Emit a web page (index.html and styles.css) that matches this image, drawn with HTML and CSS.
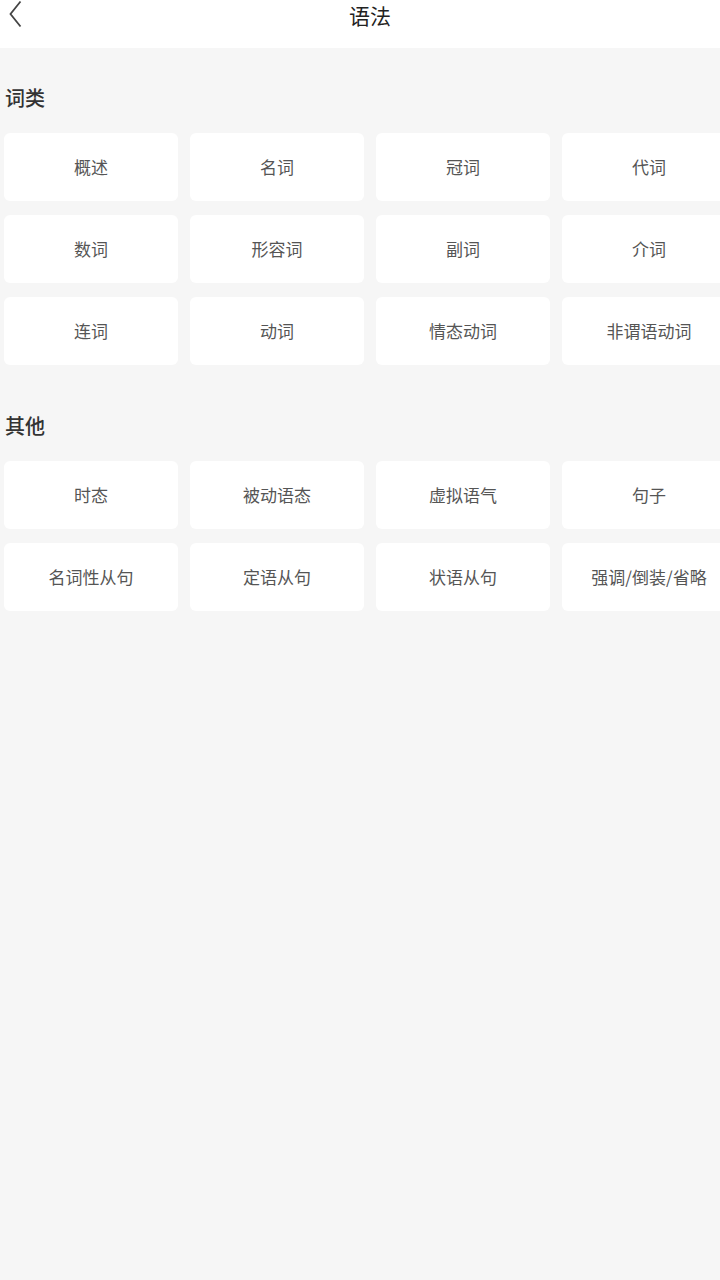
FILE: index.html
```html
<!DOCTYPE html>
<html lang="zh-CN">
<head>
  <meta charset="UTF-8">
  <title>语法</title>
  <link rel="stylesheet" href="styles.css">
</head>
<body>

<header class="topbar">
  <span class="back">
    <svg width="14" height="28" viewBox="0 0 14 28"><path d="M12.5 1.5 L2.5 14 L12.5 26.5" fill="none" stroke="#444" stroke-width="1.8"/></svg>
  </span>
  <h1>语法</h1>
</header>

<section class="group">
  <h2>词类</h2>
  <div class="grid">
    <div class="item">概述</div>
    <div class="item">名词</div>
    <div class="item">冠词</div>
    <div class="item">代词</div>
    <div class="item">数词</div>
    <div class="item">形容词</div>
    <div class="item">副词</div>
    <div class="item">介词</div>
    <div class="item">连词</div>
    <div class="item">动词</div>
    <div class="item">情态动词</div>
    <div class="item">非谓语动词</div>
  </div>
</section>

<section class="group">
  <h2>其他</h2>
  <div class="grid">
    <div class="item">时态</div>
    <div class="item">被动语态</div>
    <div class="item">虚拟语气</div>
    <div class="item">句子</div>
    <div class="item">名词性从句</div>
    <div class="item">定语从句</div>
    <div class="item">状语从句</div>
    <div class="item">强调/倒装/省略</div>
  </div>
</section>

</body>
</html>
```

FILE: styles.css
```css
body {
  font-family: "Noto Sans CJK SC", "Noto Sans", sans-serif;
  background-color: #f6f6f6;
  color: #333;
  margin: 0;
  padding: 0;
  overflow-x: hidden;
  min-height: 1280px;
}
.topbar {
  height: 48px;
  background: white;
  position: relative;
  display: flex;
  justify-content: center;
}
.topbar h1 {
  margin: 0;
  font-size: 21px;
  font-weight: normal;
  line-height: 30px;
  color: #222;
  padding-left: 20px;
}
.back {
  position: absolute;
  left: 8px;
  top: 0;
}
.group {
  padding: 0 4px;
}
.group + .group {
  margin-top: 11px;
}
.group h2 {
  margin: 0;
  font-size: 20px;
  font-weight: 500;
  color: #333;
  line-height: 28px;
  padding: 36px 0 21px 1px;
}
.grid {
  display: grid;
  grid-template-columns: repeat(4, 174px);
  column-gap: 12px;
  row-gap: 14px;
}
.item {
  background: white;
  border-radius: 6px;
  height: 68px;
  display: flex;
  align-items: center;
  justify-content: center;
  font-size: 17px;
  color: #555;
  padding-bottom: 2px;
  box-sizing: border-box;
}
```
